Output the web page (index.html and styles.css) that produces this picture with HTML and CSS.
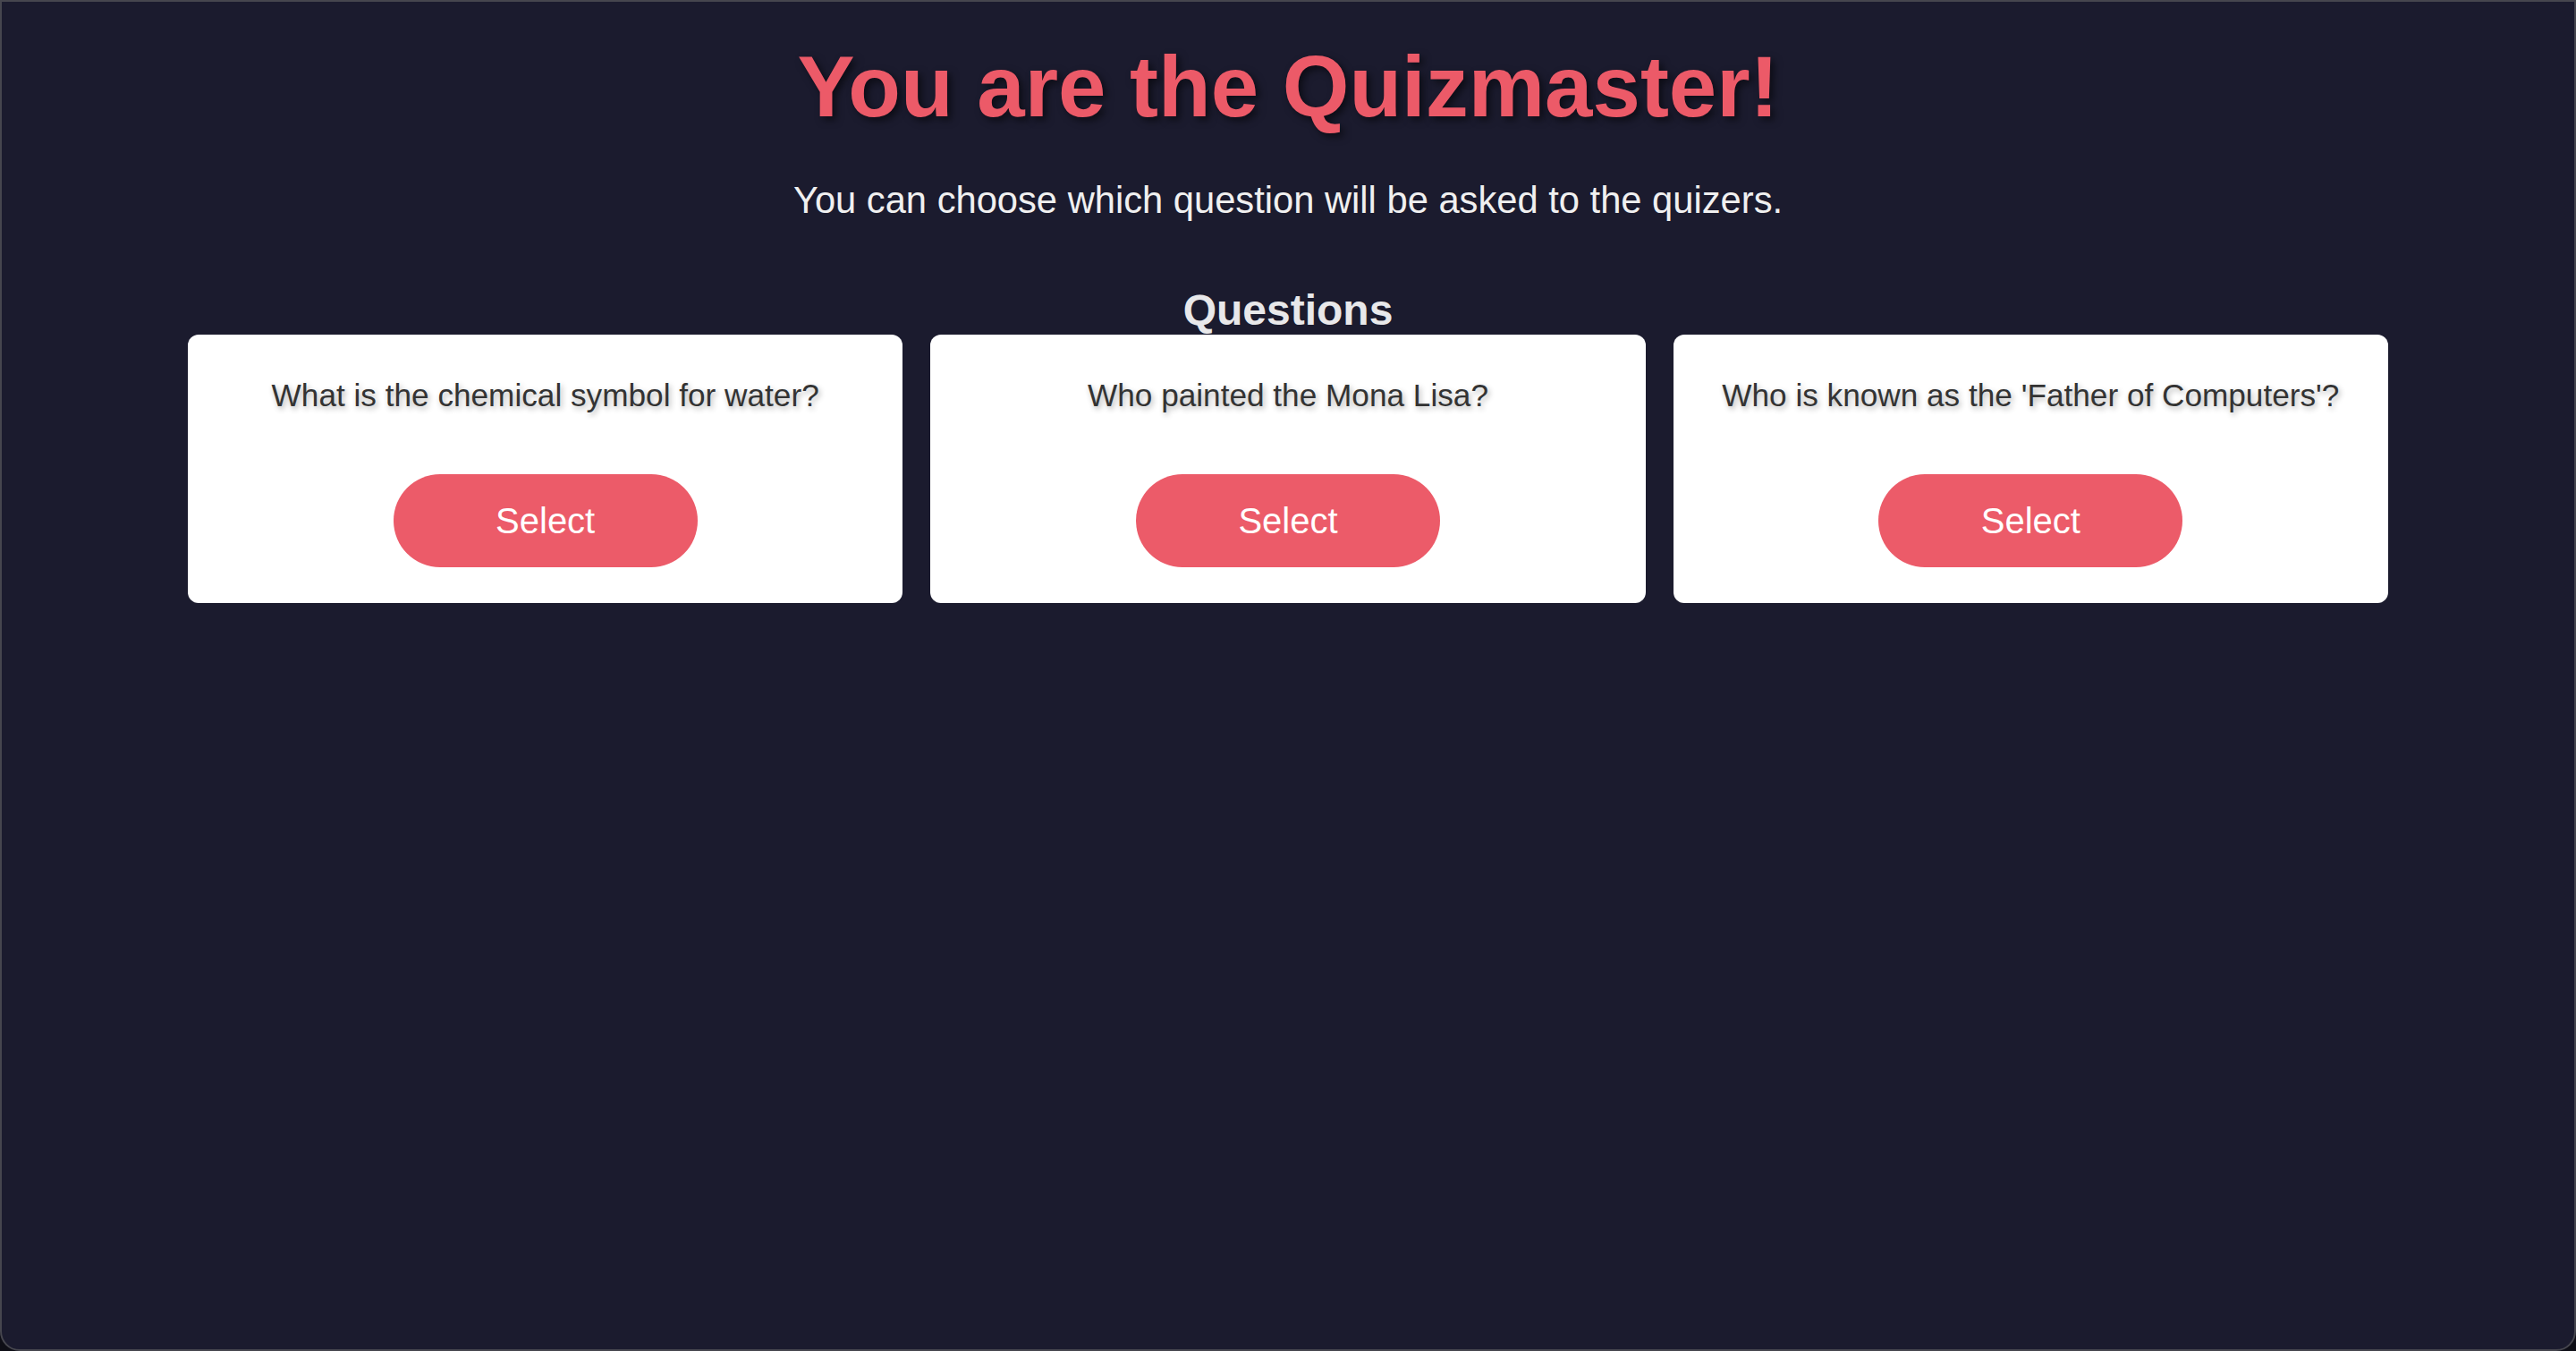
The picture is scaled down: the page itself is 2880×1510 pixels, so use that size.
FILE: index.html
```html
<!DOCTYPE html>
<html lang="en">
<head>
<meta charset="utf-8">
<title>Quizmaster</title>
<link rel="stylesheet" href="styles.css">
</head>
<body>
<main class="page">
  <h1 class="title">You are the Quizmaster!</h1>
  <p class="subtitle">You can choose which question will be asked to the quizers.</p>
  <h2 class="section-title">Questions</h2>
  <div class="question-grid">
    <div class="question-card">
      <p class="question-text">What is the chemical symbol for water?</p>
      <button class="select-btn">Select</button>
    </div>
    <div class="question-card">
      <p class="question-text">Who painted the Mona Lisa?</p>
      <button class="select-btn">Select</button>
    </div>
    <div class="question-card">
      <p class="question-text">Who is known as the 'Father of Computers'?</p>
      <button class="select-btn">Select</button>
    </div>
  </div>
</main>
</body>
</html>
```

FILE: styles.css
```css
html {
  margin: 0;
  padding: 0;
  background: #0e0e16;
}

body {
  margin: 0;
  width: 2880px;
  height: 1510px;
  box-sizing: border-box;
  background: #1b1b2e;
  border: 2px solid #46464e;
  border-radius: 0 0 22px 22px;
  font-family: "Liberation Sans", Arial, sans-serif;
  overflow: hidden;
}

.page {
  display: flex;
  flex-direction: column;
  align-items: center;
}

.title {
  margin: 40px 0 0;
  font-size: 96px;
  line-height: 110px;
  font-weight: 700;
  color: #ec5a68;
  text-shadow: 4px 4px 8px rgba(0, 0, 0, 0.55);
}

.subtitle {
  margin: 48px 0 0;
  font-size: 41.7px;
  line-height: 48px;
  color: #f0f0f0;
}

.section-title {
  margin: 71px 0 0;
  font-size: 48px;
  line-height: 55px;
  font-weight: 700;
  color: #e8e8ea;
}

.question-grid {
  width: 2460px;
  display: grid;
  grid-template-columns: repeat(3, 1fr);
  gap: 31px;
}

.question-card {
  background: #ffffff;
  border-radius: 12px;
  padding: 47px 40px 40px;
  display: flex;
  flex-direction: column;
  align-items: center;
  text-align: center;
}

.question-text {
  margin: 0 0 68px;
  font-size: 35.2px;
  line-height: 41px;
  color: #333333;
  text-shadow: 2px 3px 6px rgba(0, 0, 0, 0.3);
}

.select-btn {
  width: 340px;
  height: 104px;
  border: none;
  border-radius: 52px;
  background: #ec5b69;
  color: #ffffff;
  font-family: "Liberation Sans", Arial, sans-serif;
  font-size: 40px;
  cursor: pointer;
}
```
